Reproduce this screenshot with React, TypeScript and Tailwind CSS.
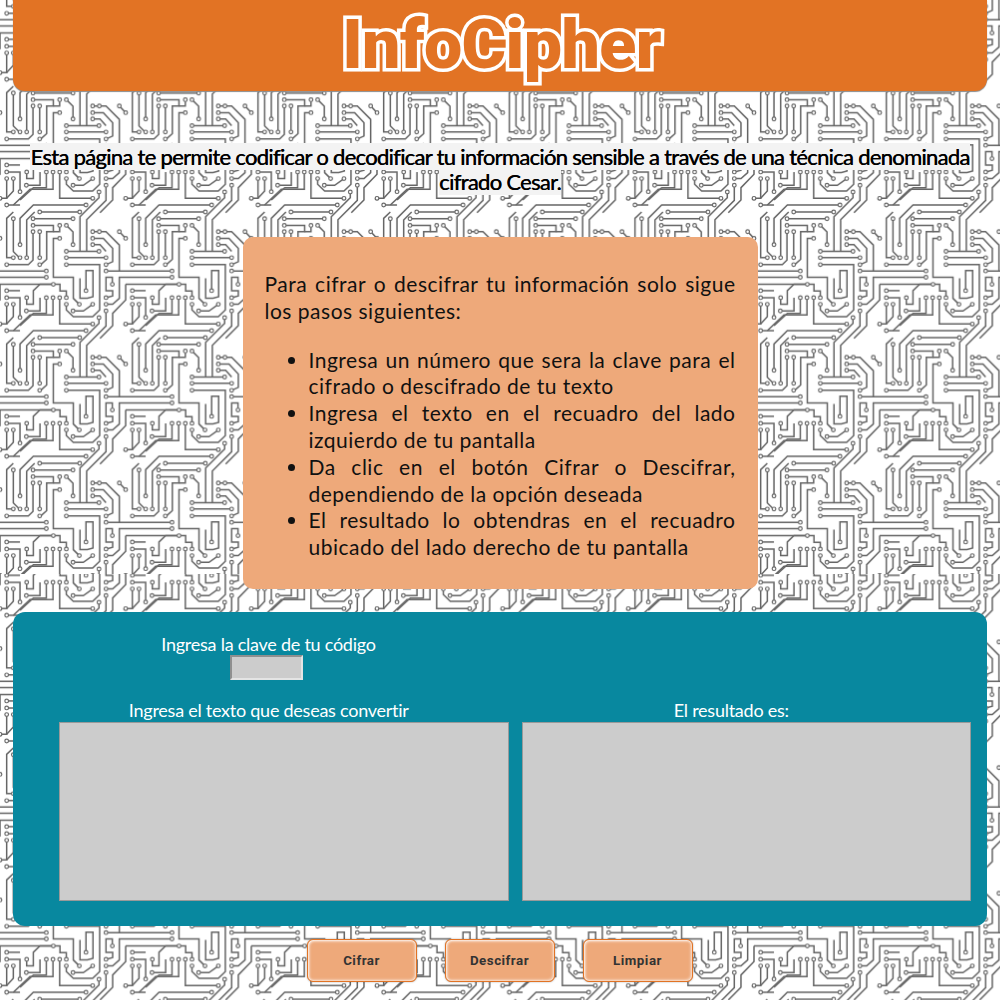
import React from 'react';

// trazos del fondo, en pixeles del recorte x3 (una baldosa mide 377)
const TRACES = [
  'M258 15H100L60 55V134',
  'M119 36H239',
  'M99 56H219',
  'M40 56V155L58 173',
  'M40 173H20V55L40 36',
  'M80 173V60L104 36',
  'M99 76H160V95H140V178L122 194',
  'M99 95V180L85 194H20',
  'M119 95V173',
  'M179 115H160V232H220V295L238 313',
  'M179 76V95H160',
  'M199 76L219 96V134',
  'M199 154H297',
  'M199 173H318',
  'M199 194H299V330L278 350H220L199 330V313',
  'M258 272V212H279V290L262 295H240V235',
  'M297 353V370L240 427V531',
  'M318 333V378L260 436V531',
  'M278 95H318L358 135V213',
  'M278 115H310L338 145V185L318 194',
  'M278 134H300L318 154',
  'M318 213H377M0 213H139',
  'M337 253V232H318V272H338V288L318 293',
  'M139 232H0M377 232H358V295L338 313H318',
  'M160 253H0M377 253V300L338 340V377L300 415',
  'M20 272H60',
  'M20 293H60V352',
  'M20 313V372L0 372',
  'M40 313V350L20 372',
  'M80 293V313H100V272L120 253H180V273H199V293',
  'M79 333H120V293',
  'M139 293V340H100L60 377',
  'M159 293V345H90L40 392',
  'M179 293V372H278',
  'M219 333H250L278 313',
  'M358 95L377 115',
  'M20 392H60',
];

const NODES: [number, number][] = [
  [258, 15], [119, 36], [239, 36], [99, 56], [219, 56], [40, 56], [60, 134], [20, 15],
  [99, 76], [99, 95], [119, 95], [179, 76], [199, 76], [219, 134], [179, 115],
  [40, 173], [60, 173], [80, 173], [119, 173], [20, 194], [119, 194],
  [199, 154], [199, 173], [199, 194], [297, 154], [278, 95], [298, 95], [278, 115], [278, 134],
  [318, 173], [318, 194], [318, 213], [139, 213], [139, 232], [160, 253], [337, 253], [358, 95],
  [258, 272], [20, 272], [20, 293], [20, 313], [40, 313], [80, 293], [79, 333],
  [139, 293], [159, 293], [179, 293], [199, 293], [199, 313], [219, 333], [238, 313], [278, 313],
  [318, 293], [318, 313], [318, 333], [60, 352], [297, 353], [278, 372], [0, 115], [0, 372],
];

const OFFSETS = [-377, 0, 377];

const Tile = () => (
  <>
    {OFFSETS.map(ox =>
      OFFSETS.map(oy => (
        <g key={`${ox}-${oy}`} transform={`translate(${ox} ${oy})`}>
          {TRACES.map(d => (
            <path key={d} d={d} fill="none" stroke="#646464" strokeWidth="4.5" />
          ))}
          {NODES.map(([x, y]) => (
            <circle key={`${x}-${y}`} cx={x} cy={y} r="5.5" fill="#fff" stroke="#646464" strokeWidth="3.5" />
          ))}
        </g>
      ))
    )}
  </>
);

const CircuitBackground = () => (
  <svg className="absolute inset-0 w-full h-full" aria-hidden="true">
    <defs>
      <pattern id="tileTop" width="377" height="377" patternUnits="userSpaceOnUse" patternTransform="translate(0 200) scale(0.33333)">
        <Tile />
      </pattern>
      <pattern id="tileBottom" width="377" height="377" patternUnits="userSpaceOnUse" patternTransform="translate(0 233.3) scale(0.33333)">
        <Tile />
      </pattern>
    </defs>
    <rect x="0" y="0" width="1000" height="574" fill="url(#tileTop)" />
    <rect x="0" y="574" width="1000" height="426" fill="url(#tileBottom)" />
  </svg>
);

const PASOS = [
  'Ingresa un número que sera la clave para el cifrado o descifrado de tu texto',
  'Ingresa el texto en el recuadro del lado izquierdo de tu pantalla',
  'Da clic en el botón Cifrar o Descifrar, dependiendo de la opción deseada',
  'El resultado lo obtendras en el recuadro ubicado del lado derecho de tu pantalla',
];

const BOTONES = ['Cifrar', 'Descifrar', 'Limpiar'];

export default function App() {
  return (
    <div className="relative w-[1000px] h-[1000px] overflow-hidden bg-white font-['Lato',sans-serif]">
      <CircuitBackground />

      <div className="relative">
        {/* Encabezado */}
        <header className="mx-[13px] h-[91px] rounded-b-xl bg-[#e27324] shadow-[0_1px_1px_#8a8a8a] flex justify-center overflow-visible">
          <h1 className="mt-[-3px] ml-[3px] h-[96px] text-[68px] leading-[96px] font-black tracking-[-0.6px] text-[#e27324] [-webkit-text-stroke:7px_white] [paint-order:stroke_fill] font-['Roboto',sans-serif]">
            InfoCipher
          </h1>
        </header>

        {/* Descripcion */}
        <p className="mt-[53px] px-[28px] text-center text-[22px] leading-[25px] font-normal tracking-[-0.7px] text-black [text-shadow:0.4px_0_0_#000]">
          <span className="bg-[#f3f3f3]">
            Esta página te permite codificar o decodificar tu información sensible a través de una técnica denominada cifrado Cesar.
          </span>
        </p>

        {/* Instrucciones */}
        <section className="mt-[43px] mx-auto w-[515px] h-[352px] rounded-[10px] bg-[#eea97a] px-[22px] pt-[34px] text-[21px] leading-[26.8px] tracking-[0.5px] text-[#111] text-justify">
          <p>Para cifrar o descifrar tu información solo sigue los pasos siguientes:</p>
          <ul className="mt-[22px] pl-[44px] list-disc">
            {PASOS.map(paso => (
              <li key={paso}>{paso}</li>
            ))}
          </ul>
        </section>

        {/* Formulario */}
        <section className="mt-[23px] mx-[13px] h-[314px] rounded-xl bg-[#08889f] text-white text-[18px] leading-[22px] tracking-[-0.25px]">
          <div className="pt-[21px] w-[511px] flex flex-col items-center">
            <label>Ingresa la clave de tu código</label>
            <input className="mr-[4px] w-[73px] h-[25px] bg-[#cccccc] border-2 border-t-[#8f8f8f] border-l-[#8f8f8f] border-r-[#e4e4e4] border-b-[#e4e4e4]" />
          </div>
          <div className="mt-[19px] pl-[46px] pr-[16px] grid grid-cols-2 gap-x-[13px]">
            <div className="flex flex-col items-center">
              <label className="mr-[30px]">Ingresa el texto que deseas convertir</label>
              <textarea className="mt-[1px] w-full h-[179px] bg-[#cccccc] border border-[#999999] resize-none" />
            </div>
            <div className="flex flex-col items-center">
              <label className="mr-[30px]">El resultado es:</label>
              <textarea className="mt-[1px] w-full h-[179px] bg-[#cccccc] border border-[#999999] resize-none" />
            </div>
          </div>
        </section>

        {/* Botones */}
        <div className="mt-[13px] flex justify-center gap-[28px] pr-[1px]">
          {BOTONES.map(b => (
            <button
              key={b}
              className="w-[110px] h-[43px] rounded-md bg-[#eea97a] border border-[#e27324] text-[13.33px] font-bold text-[#333] font-['Roboto',sans-serif] tracking-[0.5px] shadow-[inset_1px_1px_3px_#fff,inset_-1px_-1px_3px_#ffffffaa,0_0_2px_#00000055]"
            >
              {b}
            </button>
          ))}
        </div>
      </div>
    </div>
  );
}
